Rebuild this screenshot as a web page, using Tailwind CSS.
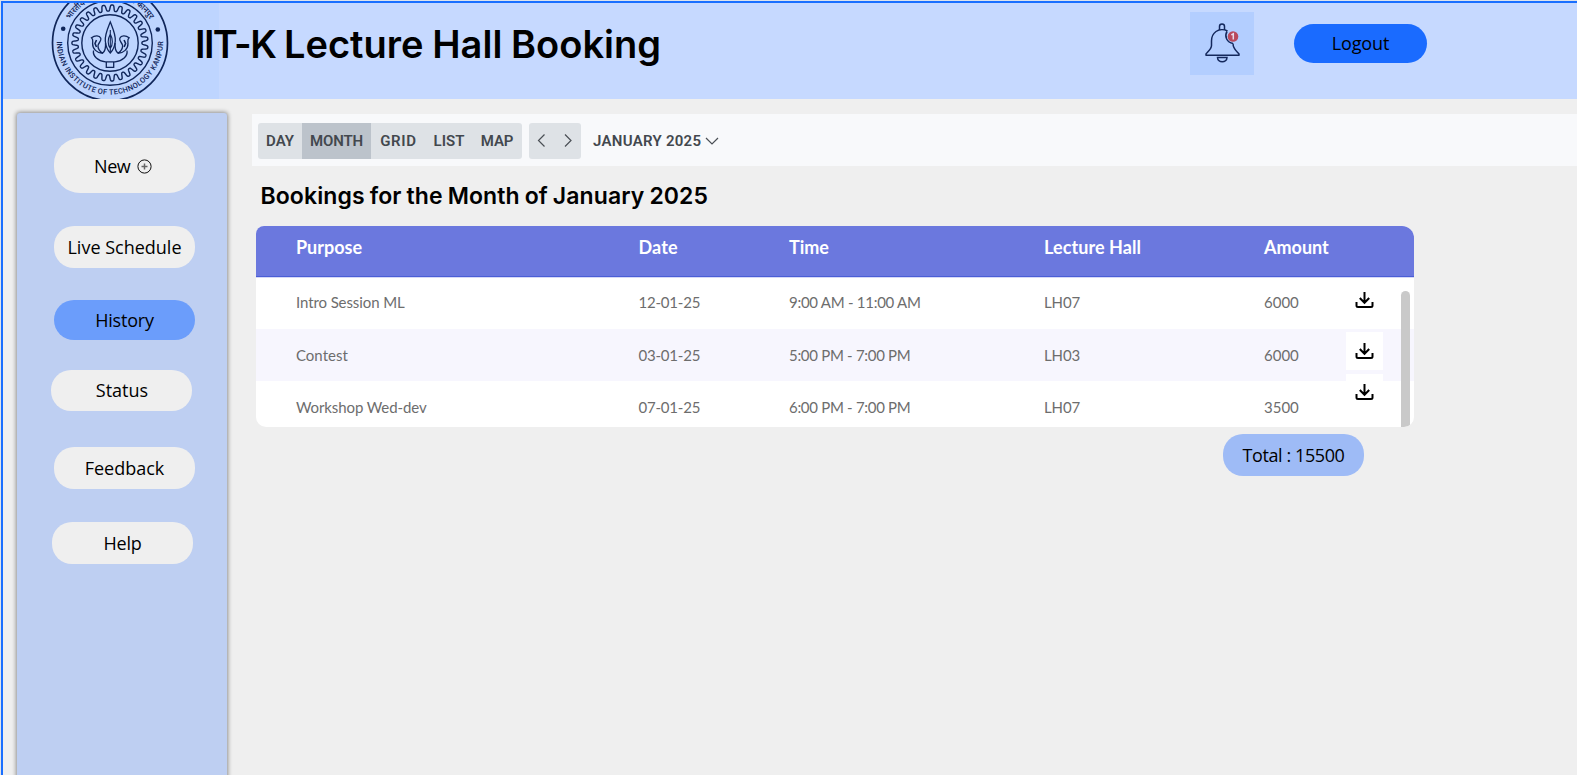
<!DOCTYPE html>
<html lang="en">
<head>
<meta charset="utf-8">
<title>IIT-K Lecture Hall Booking</title>
<script src="https://cdn.jsdelivr.net/npm/@tailwindcss/browser@4"></script>
</head>
<body class="bg-[#dfe3ea]">
<div class="w-[1577px] h-[775px] pl-px pt-px overflow-hidden">
<div class="w-full h-full border-l-2 border-t-2 border-[#1a6fff] bg-[#efefef] font-['Open_Sans',sans-serif] text-[18px] text-black flex flex-col">
  <header class="h-24 shrink-0 bg-[#c6d9ff] flex">
    <div class="w-[216px] shrink-0 bg-[#bed5ff] overflow-hidden">
      <svg class="block" width="216" height="96" viewBox="3 3 216 96" fill="none" stroke="#10265a">
        <circle cx="110" cy="43" r="57.5" stroke-width="1.7"/>
        <circle cx="110" cy="43" r="42.3" stroke-width="1.4"/>
        <circle cx="110" cy="43" r="28.2" stroke-width="1.4"/>
        <path id="gear" stroke-width="1.4" stroke-linejoin="round"/>
        <circle cx="63.2" cy="28.7" r="2.3" fill="#10265a" stroke="none"/>
        <circle cx="157.8" cy="29.5" r="2.3" fill="#10265a" stroke="none"/>
        <path d="M110.300 22C107.500 29 104.800 34.500 105.300 41C105.800 46 107.300 50 110.300 53C113.300 50 114.800 46 115.300 41C115.800 34.500 113 29 110.300 22Z" stroke-width="1.3"/>
        <path d="M110.300 34C107.500 39 107.500 45 110.300 48.500C113 45 113 39 110.300 34ZM110.300 30V52" stroke-width="1.1"/>
        <path d="M105.500 43C105.800 47 105.500 51 102.500 53.300C97 53 92.500 49 92.600 43.500C92.700 41 93.500 39.500 91.500 37.800C95 35 99.500 35.300 100.800 38.300C101.800 41 98.500 42.500 98 45.500C97.800 48 99.500 51 102.500 53.300" stroke-width="1.3"/>
        <path d="M115.100 43C114.800 47 115.100 51 118.100 53.300C123.600 53 128.100 49 128 43.500C127.900 41 127.100 39.500 129.100 37.800C125.600 35 121.100 35.300 119.800 38.300C118.800 41 122.100 42.500 122.600 45.500C122.800 48 121.100 51 118.100 53.300" stroke-width="1.3"/>
        <path d="M96.500 40L95 43.500L96.500 47M124.100 40L125.600 43.500L124.100 47" stroke-width="1.6"/>
        <path d="M93.500 50.500C92.500 56 98 61 105.500 61.800H115C122.500 61 128 56 127 50.500M106.300 62V67.300H113.700V62" stroke-width="1.3"/>
        <path id="lower" d="M56.800 41.500A53.200 53.200 0 0 0 163.200 41.500" stroke="none"/>
        <path id="upper" d="M70.300 19.500A46.300 46.300 0 0 1 149.700 19.500" stroke="none"/>
        <text fill="#10265a" stroke="none" class="font-['Roboto',sans-serif] text-[7.500px] font-medium"><textPath href="#lower" textLength="167" lengthAdjust="spacing">INDIAN INSTITUTE OF TECHNOLOGY KANPUR</textPath></text>
        <text fill="#10265a" stroke="none" class="font-['Noto_Sans_Devanagari','Noto_Sans',sans-serif] text-[8.500px] font-semibold"><textPath href="#upper" textLength="95" lengthAdjust="spacingAndGlyphs">भारतीय प्रौद्योगिकी संस्थान कानपुर</textPath></text>
      </svg>
    </div>
    <h1 class="-ml-[24px] w-[994px] pt-[17px] font-['Inter',sans-serif] font-semibold text-[38px] leading-[48px] tracking-[0.030px] [word-spacing:-1px] whitespace-nowrap"><span class="tracking-[-1.600px]">IIT-K</span> Lecture Hall Booking</h1>
    <div class="mt-[9px] ml-px w-16 h-[63px] bg-[#b3ceff]">
      <svg width="64" height="63" viewBox="0 0 64 63" fill="none" stroke="#14285c" stroke-width="1.500">
        <path d="M29.500 18V14.500C29.500 11.300 34.500 11.300 34.500 14.500V18"/>
        <path d="M37.500 19C34 17.300 29 17.500 26 19.500C22.500 22 21.500 25 21.500 29V33.500C21.500 37 18 39.500 16 42V43.200H49V42C47 39.500 43 37 43 31.500M37 19.500C34 24.500 37 30.500 43 31.500" stroke-linejoin="round"/>
        <path d="M27.500 45.500H37C37 51 27.500 51 27.500 45.500Z"/>
        <circle cx="43" cy="24.500" r="5.300" fill="#b94a5c" stroke="none"/>
        <path d="M41.300 22.800L43.300 21.800V27.500" stroke="#e8dcea" stroke-width="1.500"/>
      </svg>
    </div>
    <button class="ml-10 mt-[21px] w-[133px] h-[39px] rounded-[20px] bg-[#1a6bff] tracking-[-0.100px]">Logout</button>
  </header>

  <div class="flex flex-1 min-h-0">
    <aside class="ml-3.5 mt-3.5 w-[210px] h-[670px] shrink-0 rounded-[3px] bg-[#becff2] shadow-[0_0_4px_1px_rgba(0,0,0,0.4)] flex flex-col items-start pl-[37px] pt-[25px]">
      <button class="w-[141px] h-[55px] rounded-[26px] bg-[#efefef] flex items-center pl-10 pt-0.5 gap-[7px] tracking-[-0.400px]">New
        <svg width="15" height="15" viewBox="0 0 15 15" fill="none" stroke="#111"><circle cx="7.500" cy="7.500" r="6.600"/><path d="M7.500 4.500V10.500M4.500 7.500H10.500" stroke="#666" stroke-width="1.500"/></svg>
      </button>
      <button class="mt-[33px] w-[141px] h-[42px] rounded-[20px] bg-[#efefef]">Live Schedule</button>
      <button class="mt-8 w-[141px] h-10 rounded-[20px] bg-[#6b9dfb] tracking-[-0.200px]">History</button>
      <button class="-ml-[3px] mt-[30px] w-[141px] h-[41px] rounded-[20px] bg-[#efefef] pl-px">Status</button>
      <button class="mt-9 w-[141px] h-[42px] rounded-[20px] bg-[#efefef]">Feedback</button>
      <button class="-ml-0.5 mt-[33px] w-[141px] h-[42px] rounded-[20px] bg-[#efefef] tracking-[-0.200px]">Help</button>
    </aside>

    <main class="ml-[25px] mt-[15px] flex-1 min-w-0">
      <nav class="h-[52px] bg-[#f8f9fb] pl-1.5 pt-[9px] flex font-['Roboto',sans-serif] font-semibold text-[15px] text-[#43484e]">
        <div class="h-9 rounded-[3px] overflow-hidden bg-[#dee2e6] flex">
          <button class="w-11">DAY</button>
          <button class="w-[69px] bg-[#bcc3cb] tracking-[-0.100px]">MONTH</button>
          <button class="w-[55px] tracking-[0.700px]">GRID</button>
          <button class="w-[46px]">LIST</button>
          <button class="w-[50px] tracking-[-0.200px]">MAP</button>
        </div>
        <div class="ml-[7px] w-[52px] h-9 rounded-[3px] bg-[#dee2e6]">
          <svg width="52" height="36" fill="none" stroke="#4a4f55" stroke-width="1.200"><path d="M15.500 11.500L9.500 17.500L15.500 23.500M36 11.500L42 17.500L36 23.500"/></svg>
        </div>
        <div class="ml-3 h-9 flex items-center gap-1 tracking-[0.280px]">JANUARY 2025
          <svg width="14" height="10" fill="none" stroke="#4a4f55" stroke-width="1.200"><path d="M1 2L7 8L13 2"/></svg>
        </div>
      </nav>
      <h2 class="ml-[8.500px] mt-[15px] h-[45px] leading-[30px] font-['Inter',sans-serif] font-semibold text-[23px] tracking-[0.100px] [word-spacing:-0.900px]">Bookings for the Month of January 2025</h2>

      <section class="relative ml-1 w-[1158px] h-[201px] overflow-hidden rounded-[8px_12px_10px_10px] bg-white font-['Lato',sans-serif] text-[15px] text-[#6d6d6d]">
        <div class="h-[51px] bg-[#6b78de] border-b border-[#4a5ed6] pl-10 pb-[7px] grid grid-cols-[342.500px_150.500px_255px_220px_1fr] items-center font-bold text-[18px] text-white">
          <span>Purpose</span><span class="tracking-[0.100px]">Date</span><span>Time</span><span class="tracking-[0.080px]">Lecture Hall</span><span>Amount</span>
        </div>
        <div class="h-[52px] pl-10 pb-[3px] border-t border-[#d5d8f6] grid grid-cols-[342.500px_150.500px_255px_220px_1fr] items-center">
          <span class="tracking-[-0.100px]">Intro Session ML</span><span class="tracking-[-0.200px]">12-01-25</span><span class="tracking-[-0.270px]">9:00 AM - 11:00 AM</span><span class="tracking-[-0.100px]">LH07</span><span>6000</span>
        </div>
        <div class="h-[52px] pl-10 bg-[#f7f6fe] grid grid-cols-[342.500px_150.500px_255px_220px_1fr] items-center">
          <span>Contest</span><span class="tracking-[-0.200px]">03-01-25</span><span class="tracking-[-0.300px]">5:00 PM - 7:00 PM</span><span class="tracking-[-0.100px]">LH03</span><span>6000</span>
        </div>
        <div class="h-[52px] pl-10 grid grid-cols-[342.500px_150.500px_255px_220px_1fr] items-center">
          <span class="tracking-[-0.100px]">Workshop Wed-dev</span><span class="tracking-[-0.200px]">07-01-25</span><span class="tracking-[-0.300px]">6:00 PM - 7:00 PM</span><span class="tracking-[-0.100px]">LH07</span><span>3500</span>
        </div>
        <!-- download buttons, floating over the right end of the rows -->
        <div class="absolute left-[1090px] top-[55px] w-[37px] flex flex-col text-black">
          <button class="h-[38px] bg-white flex justify-center pt-[11px]"><svg width="19" height="17" viewBox="0 0 19 17" fill="none" stroke="currentColor" stroke-width="2"><path d="M9.500 0V11M4.800 6L9.500 10.800L14.200 6M1.500 10V13.500Q1.500 15 3 15H16Q17.500 15 17.500 13.500V10"/></svg></button>
          <button class="mt-[13px] h-[38px] bg-white flex justify-center pt-[11px]"><svg width="19" height="17" viewBox="0 0 19 17" fill="none" stroke="currentColor" stroke-width="2"><path d="M9.500 0V11M4.800 6L9.500 10.800L14.200 6M1.500 10V13.500Q1.500 15 3 15H16Q17.500 15 17.500 13.500V10"/></svg></button>
          <button class="mt-1 h-[38px] bg-white flex justify-center pt-[10px]"><svg width="19" height="17" viewBox="0 0 19 17" fill="none" stroke="currentColor" stroke-width="2"><path d="M9.500 0V11M4.800 6L9.500 10.800L14.200 6M1.500 10V13.500Q1.500 15 3 15H16Q17.500 15 17.500 13.500V10"/></svg></button>
        </div>
        <div class="absolute left-[1145px] top-[65px] w-[9px] h-[136px] rounded-t-[5px] bg-[#c9c9c9]"></div>
      </section>
      <div class="ml-[971px] mt-[7px] w-[141px] h-[42px] rounded-[20px] bg-[#9ebbf6] flex items-center justify-center tracking-[-0.400px]">Total : 15500</div>
    </main>
  </div>
</div>
</div>
<script>
// Toothed wheel of the emblem: 27 rounded teeth between radii 32 and 38.
let d = '';
for (let i = 0; i <= 810; i++) {
  const a = i / 810 * 2 * Math.PI;
  const r = 35 + 3.2 * Math.tanh(2 * Math.sin(27 * a));
  d += (i ? 'L' : 'M') + (110 + r * Math.sin(a)).toFixed(2) + ' ' + (43 - r * Math.cos(a)).toFixed(2);
}
document.getElementById('gear').setAttribute('d', d + 'Z');
</script>
</body>
</html>
